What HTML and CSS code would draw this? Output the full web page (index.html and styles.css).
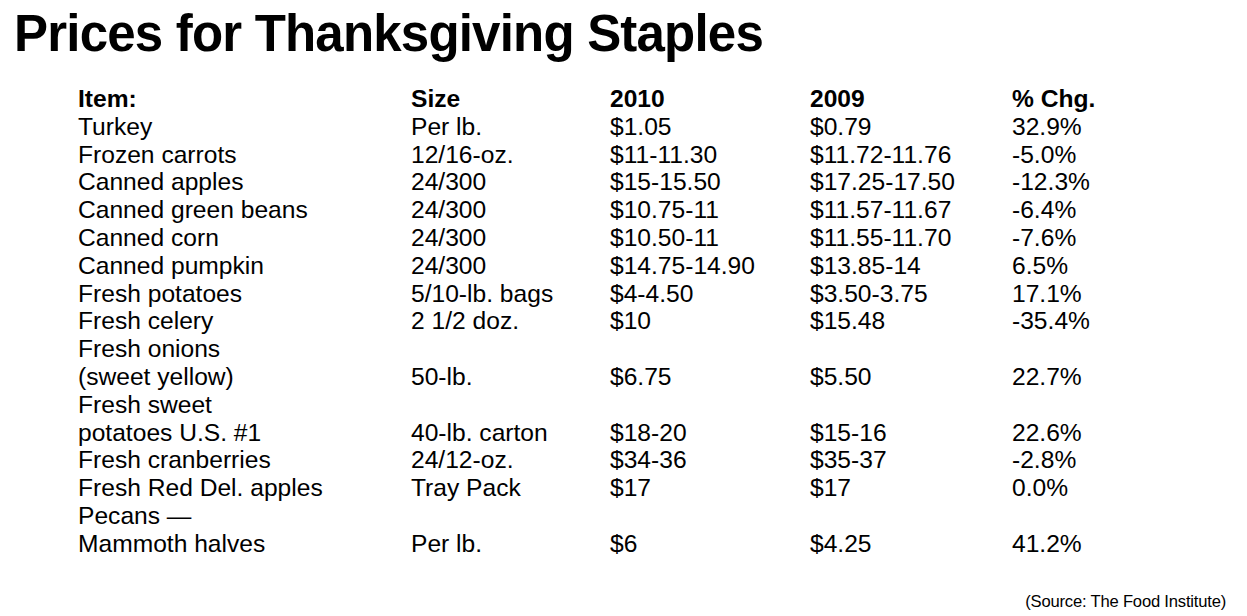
FILE: index.html
```html
<!DOCTYPE html>
<html>
<head>
<meta charset="utf-8">
<link rel="stylesheet" href="styles.css">
</head>
<body>
<div class="page">
  <h1 class="title">Prices for Thanksgiving Staples</h1>
  <div class="table">
    <div class="cell head">Item:</div><div class="cell head">Size</div><div class="cell head">2010</div><div class="cell head">2009</div><div class="cell head">% Chg.</div>
    <div class="cell">Turkey</div><div class="cell">Per lb.</div><div class="cell">$1.05</div><div class="cell">$0.79</div><div class="cell">32.9%</div>
    <div class="cell">Frozen carrots</div><div class="cell">12/16-oz.</div><div class="cell">$11-11.30</div><div class="cell">$11.72-11.76</div><div class="cell">-5.0%</div>
    <div class="cell">Canned apples</div><div class="cell">24/300</div><div class="cell">$15-15.50</div><div class="cell">$17.25-17.50</div><div class="cell">-12.3%</div>
    <div class="cell">Canned green beans</div><div class="cell">24/300</div><div class="cell">$10.75-11</div><div class="cell">$11.57-11.67</div><div class="cell">-6.4%</div>
    <div class="cell">Canned corn</div><div class="cell">24/300</div><div class="cell">$10.50-11</div><div class="cell">$11.55-11.70</div><div class="cell">-7.6%</div>
    <div class="cell">Canned pumpkin</div><div class="cell">24/300</div><div class="cell">$14.75-14.90</div><div class="cell">$13.85-14</div><div class="cell">6.5%</div>
    <div class="cell">Fresh potatoes</div><div class="cell">5/10-lb. bags</div><div class="cell">$4-4.50</div><div class="cell">$3.50-3.75</div><div class="cell">17.1%</div>
    <div class="cell">Fresh celery</div><div class="cell">2 1/2 doz.</div><div class="cell">$10</div><div class="cell">$15.48</div><div class="cell">-35.4%</div>
    <div class="cell">Fresh onions<br>(sweet yellow)</div><div class="cell">50-lb.</div><div class="cell">$6.75</div><div class="cell">$5.50</div><div class="cell">22.7%</div>
    <div class="cell">Fresh sweet<br>potatoes U.S. #1</div><div class="cell">40-lb. carton</div><div class="cell">$18-20</div><div class="cell">$15-16</div><div class="cell">22.6%</div>
    <div class="cell">Fresh cranberries</div><div class="cell">24/12-oz.</div><div class="cell">$34-36</div><div class="cell">$35-37</div><div class="cell">-2.8%</div>
    <div class="cell">Fresh Red Del. apples</div><div class="cell">Tray Pack</div><div class="cell">$17</div><div class="cell">$17</div><div class="cell">0.0%</div>
    <div class="cell">Pecans —<br>Mammoth halves</div><div class="cell">Per lb.</div><div class="cell">$6</div><div class="cell">$4.25</div><div class="cell">41.2%</div>
  </div>
  <div class="source">(Source: The Food Institute)</div>
</div>
</body>
</html>
```

FILE: styles.css
```css
html, body {
  margin: 0;
  padding: 0;
  background: #fff;
}
body {
  font-family: "Liberation Sans", Arial, Helvetica, sans-serif;
  color: #000;
  width: 1247px;
  height: 616px;
  overflow: hidden;
}
.page {
  display: flex;
  flex-direction: column;
}
.title {
  margin: 8px 0 0 14px;
  font-size: 51px;
  line-height: 51px;
  font-weight: bold;
  letter-spacing: -0.8px;
  white-space: nowrap;
}
.table {
  margin: 26px 0 0 78px;
  display: grid;
  grid-template-columns: 333px 199px 200px 202px 150px;
  font-size: 24.6px;
  line-height: 27.8px;
}
.cell {
  align-self: end;
  white-space: nowrap;
}
.head {
  font-weight: bold;
}
.source {
  align-self: flex-end;
  margin: 35px 21px 0 0;
  font-size: 16.6px;
  line-height: 18px;
  letter-spacing: -0.2px;
}
```
